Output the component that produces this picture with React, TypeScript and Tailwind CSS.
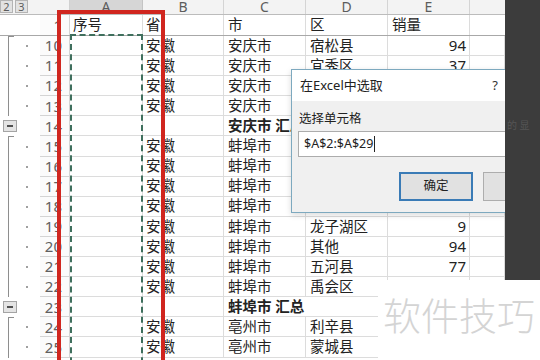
type Row = {
  n: number
  b?: string
  c?: string
  d?: string
  e?: string
  total?: boolean
  start?: boolean
}

const rows: Row[] = [
  { n: 10, b: '安徽', c: '安庆市', d: '宿松县', e: '94', start: true },
  { n: 11, b: '安徽', c: '安庆市', d: '宜秀区', e: '37' },
  { n: 12, b: '安徽', c: '安庆市', d: '迎江区', e: '52' },
  { n: 13, b: '安徽', c: '安庆市', d: '岳西县', e: '18' },
  { n: 14, c: '安庆市 汇总', total: true },
  { n: 15, b: '安徽', c: '蚌埠市', d: '蚌山区', e: '45', start: true },
  { n: 16, b: '安徽', c: '蚌埠市', d: '固镇县', e: '63' },
  { n: 17, b: '安徽', c: '蚌埠市', d: '怀远县', e: '28' },
  { n: 18, b: '安徽', c: '蚌埠市', d: '淮上区', e: '81' },
  { n: 19, b: '安徽', c: '蚌埠市', d: '龙子湖区', e: '9' },
  { n: 20, b: '安徽', c: '蚌埠市', d: '其他', e: '94' },
  { n: 21, b: '安徽', c: '蚌埠市', d: '五河县', e: '77' },
  { n: 22, b: '安徽', c: '蚌埠市', d: '禹会区', e: '56' },
  { n: 23, c: '蚌埠市 汇总', total: true },
  { n: 24, b: '安徽', c: '亳州市', d: '利辛县', e: '40', start: true },
  { n: 25, b: '安徽', c: '亳州市', d: '蒙城县', e: '72' },
]

const cell = 'h-full border-r border-b border-[#dcdcdc] flex items-center whitespace-nowrap overflow-hidden'

function Outline({ row }: { row: Row }) {
  if (row.total) {
    return (
      <div className="w-[40px] h-full flex items-center pl-[3px]">
        <span className="w-[14px] h-[12px] border border-[#a4a4a4] bg-[#e4e4e4] flex items-center justify-center">
          <span className="w-[6px] h-[2px] bg-[#505050]" />
        </span>
      </div>
    )
  }
  return (
    <div className="w-[40px] h-full flex">
      <div className="w-[18px] h-full pl-[8px]">
        <div className={`h-full border-l border-[#8e8e8e] ${row.start ? 'border-t w-[6px]' : ''}`} />
      </div>
      <div className="flex-1 flex items-center pl-[8px]">
        <span className="w-[2px] h-[2px] bg-[#a0a0a0]" />
      </div>
    </div>
  )
}

function SheetRow({ row }: { row: Row }) {
  return (
    <div className="flex h-[20.1px]">
      <Outline row={row} />
      <div className="w-[30px] h-full border-r border-b border-[#d4d4d4] bg-[#fbfbfb] flex items-center justify-end pr-[7px] text-[15px] text-[#606060]">
        {row.n}
      </div>
      <div className={`${cell} w-[73px]`} />
      <div className={`${cell} w-[81px] pl-[3px]`}>{row.b}</div>
      {row.total ? (
        <div className={`${cell} w-[164px] pl-[4px] font-bold`}>{row.c}</div>
      ) : (
        <>
          <div className={`${cell} w-[82px] pl-[4px]`}>{row.c}</div>
          <div className={`${cell} w-[82px] pl-[4px]`}>{row.d}</div>
        </>
      )}
      <div className={`${cell} w-[82px] justify-end pr-[3px] text-[15px]`}>{row.e}</div>
      <div className={`${cell} w-[35px]`} />
    </div>
  )
}

function Dialog() {
  return (
    <div className="absolute left-[291px] top-[69px] w-[230px] h-[144px] border border-[#7da9bf] bg-[#f0f0f0] overflow-hidden shadow-[0_2px_6px_rgba(0,0,0,0.15)] text-[#222]">
      <div className="h-[31px] bg-white flex items-center justify-between pl-[8px] pr-[22px] text-[13px]">
        <span>在Excel中选取</span>
        <span className="text-[#333]">?</span>
      </div>
      <div className="pt-[10px] pl-[6px]">
        <div className="text-[12.5px] leading-[16px] pl-[1px]">选择单元格</div>
        <div className="mt-[4px] h-[26px] bg-white border border-[#acacac] flex items-center pl-[5px] text-[12.5px]">
          <span>$A$2:$A$29</span>
          <span className="w-px h-[16px] bg-[#222] ml-[1px]" />
        </div>
        <div className="mt-[15px] flex gap-[10px] pl-[101px]">
          <div className="w-[74px] h-[29px] shrink-0 border-2 border-[#3a7bb6] bg-[#e1e1e1] flex items-center justify-center text-[12.5px]">
            确定
          </div>
          <div className="w-[74px] h-[29px] shrink-0 border border-[#adadad] bg-[#e1e1e1]" />
        </div>
      </div>
    </div>
  )
}

export default function App() {
  return (
    <div className="w-[540px] h-[360px] overflow-hidden bg-white relative flex font-['Noto_Sans','Noto_Sans_CJK_SC',sans-serif] text-[14.5px] text-[#222]">
      <div className="w-[505px] h-full relative overflow-hidden">
        {/* column headers */}
        <div className="flex h-[15px] bg-[#f3f3f3] border-b border-[#bcbcbc] text-[14px] text-[#5c5c5c] leading-none">
          <div className="w-[70px] flex gap-[2px] border-r border-[#d0d0d0]">
            <span className="w-[13px] h-[13px] border border-[#b4b4b4] bg-[#e2e2e2] flex items-center justify-center text-[11px]">2</span>
            <span className="w-[13px] h-[13px] border border-[#b4b4b4] bg-[#e2e2e2] flex items-center justify-center text-[11px]">3</span>
          </div>
          <div className="w-[73px] bg-[#d6d6d6] border-r border-[#c4c4c4] flex items-center justify-center">A</div>
          <div className="w-[81px] border-r border-[#d4d4d4] flex items-center justify-center">B</div>
          <div className="w-[82px] border-r border-[#d4d4d4] flex items-center justify-center">C</div>
          <div className="w-[82px] border-r border-[#d4d4d4] flex items-center justify-center">D</div>
          <div className="w-[82px] border-r border-[#d4d4d4] flex items-center justify-center">E</div>
          <div className="w-[35px]" />
        </div>

        {/* row 1, frozen */}
        <div className="flex h-[21px] border-b border-[#a8a8a8]">
          <div className="w-[40px]" />
          <div className="w-[30px] border-r border-[#d4d4d4] bg-[#fbfbfb] flex items-center justify-end pr-[7px] text-[15px] text-[#606060]">1</div>
          <div className="w-[73px] border-r border-[#dcdcdc] flex items-center pl-[3px]">序号</div>
          <div className="w-[81px] border-r border-[#dcdcdc] flex items-center pl-[3px]">省</div>
          <div className="w-[82px] border-r border-[#dcdcdc] flex items-center pl-[4px]">市</div>
          <div className="w-[82px] border-r border-[#dcdcdc] flex items-center pl-[4px]">区</div>
          <div className="w-[82px] border-r border-[#dcdcdc] flex items-center pl-[4px]">销量</div>
          <div className="w-[35px]" />
        </div>

        {rows.map((r) => (
          <SheetRow key={r.n} row={r} />
        ))}

        {/* copy marquee around A2:A29 */}
        <div className="absolute left-[70px] top-[34px] w-[73px] h-[400px] border-2 border-dashed border-[#3f6f5d]" />
        {/* red highlight */}
        <div className="absolute left-[57px] top-[10px] w-[108px] h-[400px] border-4 border-[#d0261f]" />

        <Dialog />
      </div>

      <div className="w-[35px] h-[280px] bg-[#3c3c3c] text-[10px] text-[#555] pt-[118px] pl-[2px] whitespace-nowrap overflow-hidden">
        的 显
      </div>

      {/* watermark */}
      <div className="absolute left-[378px] top-[280px] right-0 bottom-0 bg-white pl-[5px] pt-[16px]">
        <span className="text-[38px] leading-none font-light text-[#d4d4d4]">软件技巧</span>
      </div>
    </div>
  )
}
